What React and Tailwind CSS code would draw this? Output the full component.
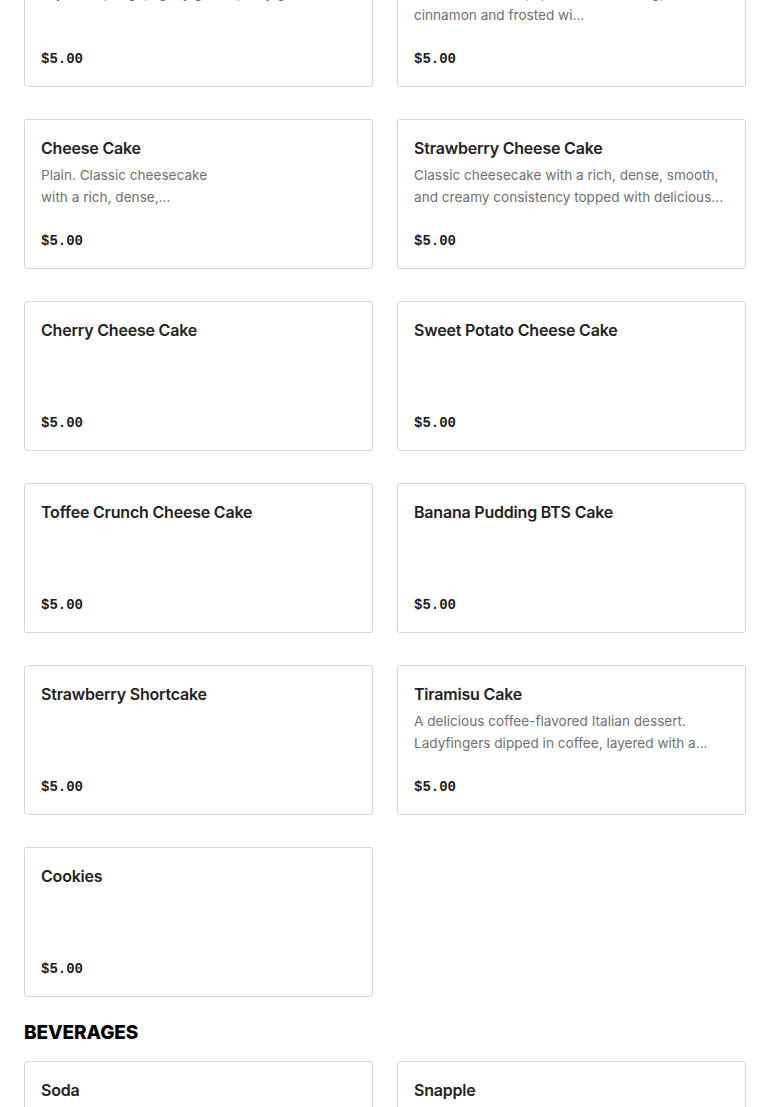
import React from 'react';

const cakes = [
  { name: 'Red Velvet Cake', desc: ['Layered sponge, lightly glazed, very good'], price: '$5.00' },
  { name: 'Carrot Cake', desc: ['Moist carrot cake, spiced with nutmeg,', 'cinnamon and frosted wi...'], price: '$5.00' },
  { name: 'Cheese Cake', desc: ['Plain. Classic cheesecake', 'with a rich, dense,...'], price: '$5.00' },
  { name: 'Strawberry Cheese Cake', desc: ['Classic cheesecake with a rich, dense, smooth,', 'and creamy consistency topped with delicious...'], price: '$5.00' },
  { name: 'Cherry Cheese Cake', desc: [], price: '$5.00' },
  { name: 'Sweet Potato Cheese Cake', desc: [], price: '$5.00' },
  { name: 'Toffee Crunch Cheese Cake', desc: [], price: '$5.00' },
  { name: 'Banana Pudding BTS Cake', desc: [], price: '$5.00' },
  { name: 'Strawberry Shortcake', desc: [], price: '$5.00' },
  { name: 'Tiramisu Cake', desc: ['A delicious coffee-flavored Italian dessert.', 'Ladyfingers dipped in coffee, layered with a...'], price: '$5.00' },
  { name: 'Cookies', desc: [], price: '$5.00' },
];

const beverages = [
  { name: 'Soda', desc: [], price: '$2.00' },
  { name: 'Snapple', desc: [], price: '$3.00' },
];

const ItemCard = ({ item }) => (
  <div className="h-[150px] bg-white border border-[#d6d6d6] rounded-[3px] px-4 pt-4 pb-[17px] flex flex-col">
    <h3 className="text-[16px] leading-6 font-semibold tracking-[-0.2px] text-[#222]">{item.name}</h3>
    {item.desc.length > 0 && (
      <p className="mt-[4px] text-[13.6px] leading-[22px] text-[#707070]">
        {item.desc.map((line, i) => (
          <span key={i} className="block whitespace-nowrap">{line}</span>
        ))}
      </p>
    )}
    <div className="mt-auto font-['Liberation_Mono',monospace] font-bold text-[14px] leading-5 text-[#1c1c1c]">
      {item.price}
    </div>
  </div>
);

export default function App() {
  return (
    <div className="min-h-screen bg-white font-['Inter','Noto_Sans',sans-serif] overflow-hidden">
      <div className="px-6 -mt-[63px]">
        <div className="grid grid-cols-2 gap-x-6 gap-y-8">
          {cakes.map((c) => (
            <ItemCard key={c.name} item={c} />
          ))}
        </div>

        <h2 className="mt-[25px] mb-[17px] text-[19px] leading-[22px] font-extrabold tracking-[-0.1px] text-black uppercase">
          Beverages
        </h2>
        <div className="grid grid-cols-2 gap-x-6 gap-y-8">
          {beverages.map((c) => (
            <ItemCard key={c.name} item={c} />
          ))}
        </div>
      </div>
    </div>
  );
}
